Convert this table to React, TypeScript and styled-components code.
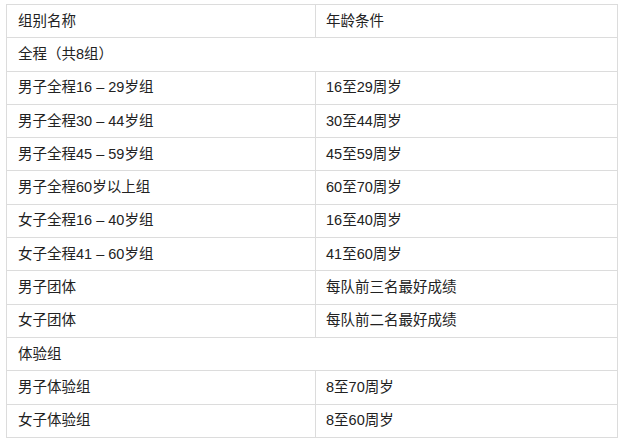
import React from "react";
import styled, { createGlobalStyle } from "styled-components";

const GlobalStyle = createGlobalStyle`
  html, body {
    margin: 0;
    padding: 0;
    background: #ffffff;
  }
  body {
    font-family: "Liberation Sans", "Noto Sans CJK SC", sans-serif;
  }
`;

const Page = styled.div`
  width: 625px;
  height: 445px;
  padding: 4px 8px 0 6px;
  box-sizing: border-box;
  background: #fff;
`;

const Table = styled.table`
  width: 612px;
  border-collapse: collapse;
  table-layout: fixed;
  font-family: "Liberation Sans", "Noto Sans CJK SC", sans-serif;
  font-size: 14.5px;
  color: #222;
`;

const Row = styled.tr`
  height: 33.3px;
`;

const Cell = styled.td<{ $first?: boolean }>`
  border: 1px solid #dcdcdc;
  padding: 0 0 1px ${(p) => (p.$first ? "11px" : "10px")};
  vertical-align: middle;
  white-space: nowrap;
  line-height: 20px;
`;

type R = { a: string; b?: string; span?: boolean };

const rows: R[] = [
  { a: "组别名称", b: "年龄条件" },
  { a: "全程（共8组）", span: true },
  { a: "男子全程16 – 29岁组", b: "16至29周岁" },
  { a: "男子全程30 – 44岁组", b: "30至44周岁" },
  { a: "男子全程45 – 59岁组", b: "45至59周岁" },
  { a: "男子全程60岁以上组", b: "60至70周岁" },
  { a: "女子全程16 – 40岁组", b: "16至40周岁" },
  { a: "女子全程41 – 60岁组", b: "41至60周岁" },
  { a: "男子团体", b: "每队前三名最好成绩" },
  { a: "女子团体", b: "每队前二名最好成绩" },
  { a: "体验组", span: true },
  { a: "男子体验组", b: "8至70周岁" },
  { a: "女子体验组", b: "8至60周岁" },
];

export default function App() {
  return (
    <>
      <GlobalStyle />
      <Page>
        <Table>
          <colgroup>
            <col style={{ width: "309px" }} />
            <col />
          </colgroup>
          <tbody>
            {rows.map((r, i) => (
              <Row key={i}>
                {r.span ? (
                  <Cell $first colSpan={2}>
                    {r.a}
                  </Cell>
                ) : (
                  <>
                    <Cell $first>{r.a}</Cell>
                    <Cell>{r.b}</Cell>
                  </>
                )}
              </Row>
            ))}
          </tbody>
        </Table>
      </Page>
    </>
  );
}
